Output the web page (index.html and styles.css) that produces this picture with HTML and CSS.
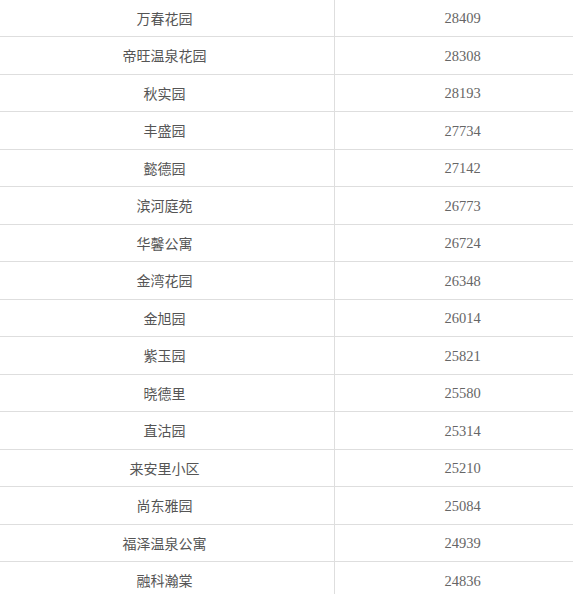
FILE: index.html
```html
<!DOCTYPE html>
<html lang="zh-CN">
<head>
<meta charset="utf-8">
<title>小区列表</title>
<link rel="stylesheet" href="styles.css">
</head>
<body>
<div class="table">
  <div class="row"><div class="name">万春花园</div><div class="num">28409</div></div>
  <div class="row"><div class="name">帝旺温泉花园</div><div class="num">28308</div></div>
  <div class="row"><div class="name">秋实园</div><div class="num">28193</div></div>
  <div class="row"><div class="name">丰盛园</div><div class="num">27734</div></div>
  <div class="row"><div class="name">懿德园</div><div class="num">27142</div></div>
  <div class="row"><div class="name">滨河庭苑</div><div class="num">26773</div></div>
  <div class="row"><div class="name">华馨公寓</div><div class="num">26724</div></div>
  <div class="row"><div class="name">金湾花园</div><div class="num">26348</div></div>
  <div class="row"><div class="name">金旭园</div><div class="num">26014</div></div>
  <div class="row"><div class="name">紫玉园</div><div class="num">25821</div></div>
  <div class="row"><div class="name">晓德里</div><div class="num">25580</div></div>
  <div class="row"><div class="name">直沽园</div><div class="num">25314</div></div>
  <div class="row"><div class="name">来安里小区</div><div class="num">25210</div></div>
  <div class="row"><div class="name">尚东雅园</div><div class="num">25084</div></div>
  <div class="row"><div class="name">福泽温泉公寓</div><div class="num">24939</div></div>
  <div class="row"><div class="name">融科瀚棠</div><div class="num">24836</div></div>
</div>
</body>
</html>
```
FILE: styles.css
```css
html, body {
  margin: 0;
  padding: 0;
  background: #fff;
  overflow: hidden;
}
.table {
  width: 595px;
  margin-top: -0.5px;
  margin-left: -5px;
  display: flex;
  flex-direction: column;
}
.row {
  display: flex;
  height: 37.5px;
  box-sizing: border-box;
  border-bottom: 1px solid #dedede;
}
.name, .num {
  display: flex;
  align-items: center;
  justify-content: center;
  font-size: 14px;
}
.name {
  width: 340px;
  box-sizing: border-box;
  border-right: 1px solid #dedede;
  font-family: "Noto Sans CJK SC", "Noto Sans", sans-serif;
  color: #555;
}
.num {
  flex: 1;
  padding-top: 2px;
  font-family: "Liberation Serif", serif;
  font-size: 14.5px;
  color: #666;
}
```
